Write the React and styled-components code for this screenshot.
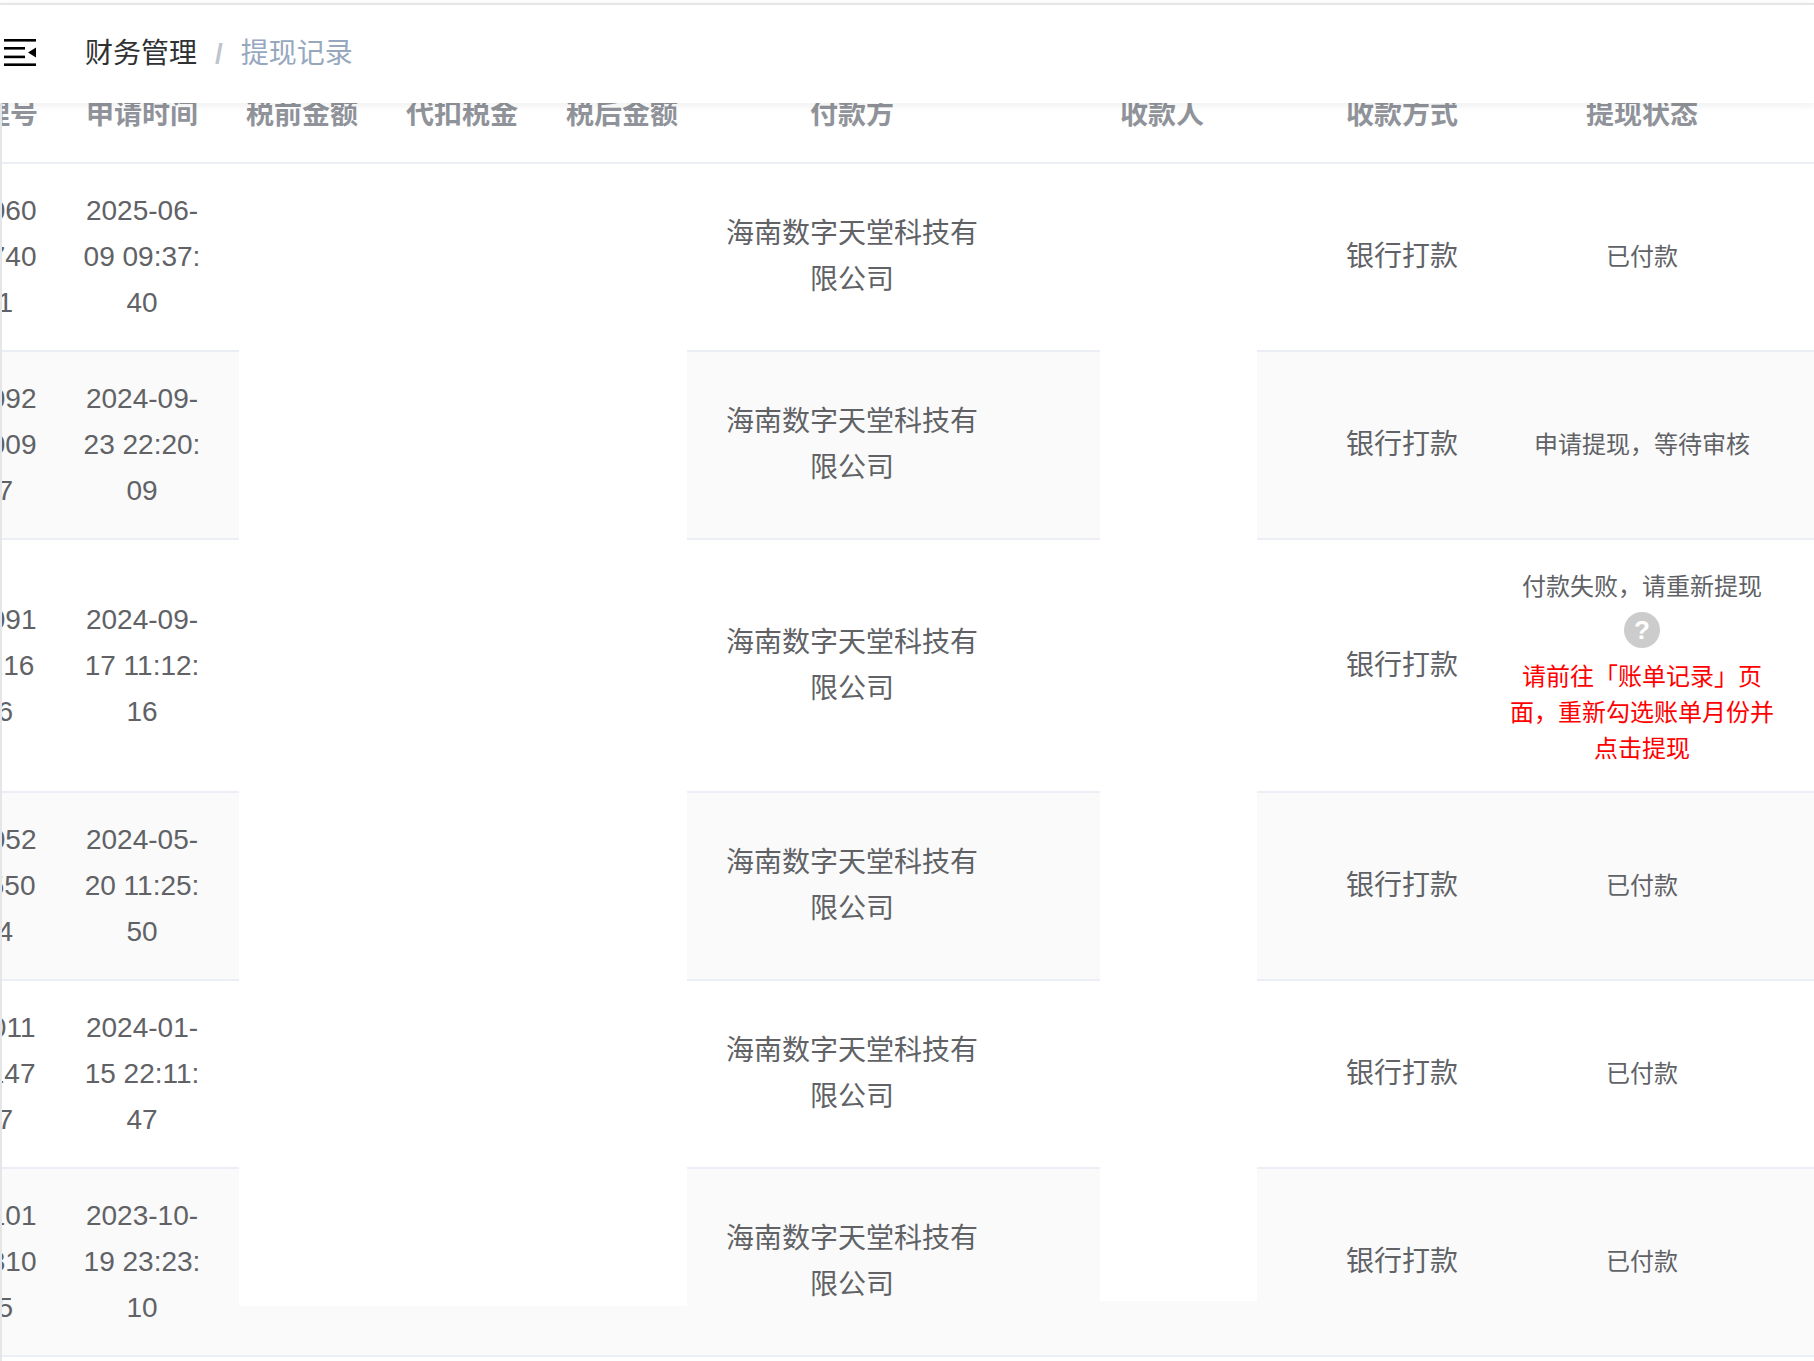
import React from "react";
import styled, { createGlobalStyle } from "styled-components";

const Global = createGlobalStyle`
  html, body { margin: 0; padding: 0; background: #fff; }
  body { font-family: "Liberation Sans", "Noto Sans CJK SC", sans-serif; height: 1361px; overflow: hidden; }
`;
const Page = styled.div`
  height: 1361px;
  padding-top: 3px;
  box-sizing: border-box;
  display: flex;
  flex-direction: column;
  overflow: hidden;
`;
const Navbar = styled.header`
  position: relative;
  z-index: 2;
  flex: none;
  height: 100px;
  box-sizing: border-box;
  border-top: 2px solid #e6e6e6;
  background: #fff;
  box-shadow: 0 2px 8px rgba(0, 21, 41, 0.08);
  display: flex;
  align-items: center;
  font-size: 28px;
  line-height: 1;
`;
const Burger = styled.svg`
  width: 32px;
  height: 27px;
  margin: 0 49px 4px 4px;
  flex: none;
`;
const Crumb = styled.span`
  color: ${(p) => (p.$last ? "#97a8be" : "#303133")};
`;
const Sep = styled.span`
  color: #c0c4cc;
  font-weight: 700;
  margin: 0 18px;
  font-size: 28px;
`;
const Main = styled.main`
  position: relative;
  flex: 1;
  min-height: 0;
  overflow: hidden;
  border-left: 2px solid #e6e6e6;
`;
const Table = styled.table`
  table-layout: fixed;
  border-collapse: separate;
  border-spacing: 0;
  width: 1915px;
  margin: -35px 0 0 -100px;
  font-size: 28px;
  line-height: 46px;
  color: #606266;
  text-align: center;
`;
const Th = styled.th`
  padding: 24px 20px;
  font-weight: 700;
  color: #909399;
  border-bottom: 2px solid #ebeef5;
`;
const Row = styled.tr`
  background: ${(p) => (p.$striped ? "#fafafa" : "#fff")};
`;
const Td = styled.td`
  padding: 24px 20px;
  border-bottom: 2px solid #ebeef5;
  word-break: break-all;
`;
const Status = styled.div`
  font-size: 24px;
  line-height: 46px;
`;
const Help = styled.span`
  display: block;
  width: 36px;
  height: 36px;
  margin: 2px auto 0;
  border-radius: 50%;
  background: #cccccc;
  color: #fff;
  font-size: 26px;
  font-weight: 700;
  line-height: 36px;
`;
const Failure = styled.div`
  margin-top: 11px;
  color: #ff0000;
  font-size: 24px;
  line-height: 36px;
`;
const Mask = styled.div`
  position: absolute;
  left: ${(p) => p.$left}px;
  top: 61px;
  width: ${(p) => p.$width}px;
  height: ${(p) => p.$height}px;
  background: #fff;
`;

const widths = [160, 160, 160, 160, 160, 300, 320, 160, 320, 15];
const headers = ["代办理号", "申请时间", "税前金额", "代扣税金", "税后金额", "付款方", "收款人", "收款方式", "提现状态", ""];
const rows = [
  { id: "202506090937400001", time: "2025-06-09 09:37:40", status: "已付款" },
  { id: "202409232220090007", time: "2024-09-23 22:20:09", status: "申请提现，等待审核" },
  { id: "202409171112160006", time: "2024-09-17 11:12:16", status: "付款失败，请重新提现", failed: true },
  { id: "202405201125500004", time: "2024-05-20 11:25:50", status: "已付款" },
  { id: "202401152211470007", time: "2024-01-15 22:11:47", status: "已付款" },
  { id: "202310192323100005", time: "2023-10-19 23:23:10", status: "已付款" },
];

export default function App() {
  return (
    <>
      <Global />
      <Page>
        <Navbar>
          <Burger viewBox="0 0 32 27" aria-hidden="true">
            <rect x="0" y="0" width="32" height="2.6" fill="#000" />
            <rect x="0" y="8" width="21" height="2.6" fill="#000" />
            <rect x="0" y="16.6" width="21" height="2.6" fill="#000" />
            <rect x="0" y="24.4" width="32" height="2.6" fill="#000" />
            <path d="M32 8.6v10l-8-5z" fill="#000" />
          </Burger>
          <Crumb>财务管理</Crumb>
          <Sep>/</Sep>
          <Crumb $last>提现记录</Crumb>
        </Navbar>
        <Main>
          <Table>
            <colgroup>
              {widths.map((w, i) => (
                <col key={i} style={{ width: w }} />
              ))}
            </colgroup>
            <thead>
              <tr>
                {headers.map((h, i) => (
                  <Th key={i}>{h}</Th>
                ))}
              </tr>
            </thead>
            <tbody>
              {rows.map((r, i) => (
                <Row key={r.id} $striped={i % 2 === 1}>
                  <Td>{r.id}</Td>
                  <Td>{r.time}</Td>
                  <Td />
                  <Td />
                  <Td />
                  <Td>海南数字天堂科技有限公司</Td>
                  <Td />
                  <Td>银行打款</Td>
                  <Td>
                    <Status>{r.status}</Status>
                    {r.failed && (
                      <>
                        <Help>?</Help>
                        <Failure>请前往「账单记录」页面，重新勾选账单月份并点击提现</Failure>
                      </>
                    )}
                  </Td>
                  <Td />
                </Row>
              ))}
            </tbody>
          </Table>
          <Mask $left={237} $width={448} $height={1142} />
          <Mask $left={1098} $width={157} $height={1137} />
        </Main>
      </Page>
    </>
  );
}
